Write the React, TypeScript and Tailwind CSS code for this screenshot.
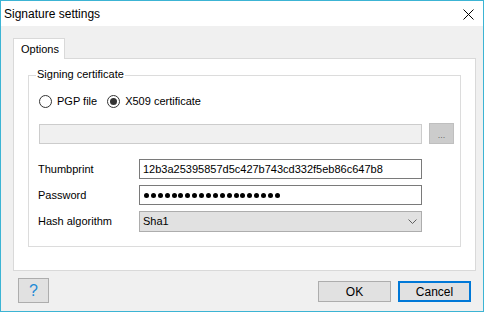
import React from 'react';

const Radio: React.FC<{ checked?: boolean; label: string }> = ({ checked, label }) => (
  <div className="flex items-center">
    <div className="w-[13px] h-[13px] rounded-full border border-[#333333] bg-white flex items-center justify-center">
      {checked && <div className="w-[7px] h-[7px] rounded-full bg-[#333333]" />}
    </div>
    <span className="ml-[5px]">{label}</span>
  </div>
);

const App: React.FC = () => {
  const dots = Array.from({ length: 20 });

  return (
    <div className="w-[484px] h-[312px] border border-[#3cb4d4] flex flex-col font-['Liberation_Sans',Arial,sans-serif] text-[11px] text-black leading-none">
      {/* title bar */}
      <div className="h-[25px] bg-white flex items-center justify-between pl-[3px] pr-[9px]">
        <span className="text-[12px]">Signature settings</span>
        <svg width="11" height="11" viewBox="0 0 11 11" className="mt-[1px]">
          <path d="M0.5 0.5 L10.5 10.5 M10.5 0.5 L0.5 10.5" stroke="#000" strokeWidth="1" />
        </svg>
      </div>

      <div className="flex-1 bg-[#f0f0f0] pt-[12px] pl-[12px] pr-[7px] flex flex-col">
        {/* tab strip */}
        <div className="flex">
          <div className="relative z-10 -mb-px w-[52px] h-[21px] bg-white border border-b-0 border-[#d9d9d9] pl-[7px] flex items-center">
            Options
          </div>
        </div>

        {/* tab page */}
        <div className="h-[213px] bg-white border border-[#d9d9d9] pt-[16px] px-[14px]">
          <div className="relative border border-[#dcdcdc] pt-[18px] h-[172px]">
            <span className="absolute -top-[7px] left-[7px] bg-white px-[1px]">Signing certificate</span>

            <div className="h-[15px] pl-[10px] flex items-center">
              <Radio label="PGP file" />
              <div className="ml-[10px]">
                <Radio checked label="X509 certificate" />
              </div>
            </div>

            <div className="mt-[14px] h-[21px] pl-[10px] flex items-end">
              <div className="w-[383px] h-[20px] bg-[#f0f0f0] border border-[#cccccc]" />
              <div className="ml-[7px] w-[25px] h-[21px] bg-[#cccccc] border border-[#bfbfbf] flex items-center justify-center pt-[3px] text-[#6d6d6d] text-[9px]">
                ...
              </div>
            </div>

            <div className="mt-[15px] pl-[9px] flex items-center">
              <span className="w-[101px]">Thumbprint</span>
              <div className="w-[283px] h-[20px] bg-white border border-[#7a7a7a] pl-[3px] flex items-center">
                12b3a25395857d5c427b743cd332f5eb86c647b8
              </div>
            </div>

            <div className="mt-[6px] pl-[9px] flex items-center">
              <span className="w-[101px]">Password</span>
              <div className="w-[283px] h-[20px] bg-white border border-[#7a7a7a] pl-[3px] flex items-center">
                {dots.map((_, i) => (
                  <span key={i} className="w-[6.9px] flex justify-center">
                    <span className="block w-[5px] h-[5px] rounded-full bg-black" />
                  </span>
                ))}
              </div>
            </div>

            <div className="mt-[6px] pl-[9px] flex items-center">
              <span className="w-[101px]">Hash algorithm</span>
              <div className="w-[283px] h-[21px] bg-[#e1e1e1] border border-[#adadad] pl-[3px] pr-[4px] flex items-center justify-between">
                <span>Sha1</span>
                <svg width="9" height="5" viewBox="0 0 9 5">
                  <path d="M0.5 0.5 L4.5 4.5 L8.5 0.5" stroke="#606060" strokeWidth="1" fill="none" />
                </svg>
              </div>
            </div>
          </div>
        </div>

        {/* button row */}
        <div className="mt-[7px] h-[25px] flex items-start">
          <div className="ml-[5px] w-[31px] h-[25px] bg-[#e1e1e1] border border-[#adadad] flex items-center justify-center text-[16px] text-[#1e8ad6]">
            ?
          </div>
          <div className="ml-auto mr-[5px] mt-[3px] flex gap-[7px]">
            <div className="w-[73px] h-[21px] bg-[#e1e1e1] border border-[#adadad] flex items-center justify-center text-[12px]">
              OK
            </div>
            <div className="w-[73px] h-[21px] bg-[#e1e1e1] border-2 border-[#0078d7] flex items-center justify-center text-[12px]">
              Cancel
            </div>
          </div>
        </div>
      </div>
    </div>
  );
};

export default App;
